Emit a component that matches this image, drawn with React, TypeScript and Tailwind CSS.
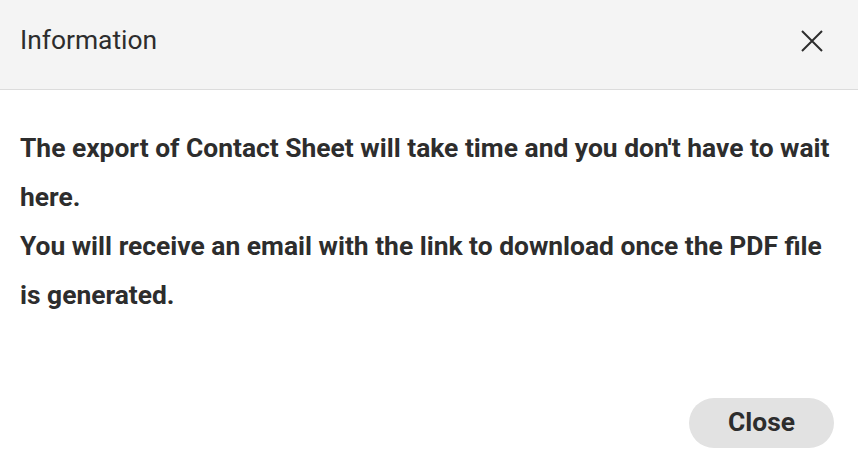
export default function App() {
  return (
    <div className="flex h-[465px] w-[858px] flex-col bg-white font-['Roboto',sans-serif] text-[#2d2d2d]">
      <div className="flex h-[90px] items-center justify-between border-b border-[#dcdcdc] bg-[#f4f4f4] pb-2 pl-5 pr-[34px]">
        <h2 className="text-[26.4px] font-normal">Information</h2>
        <button className="flex h-6 w-6 items-center justify-center">
          <svg width="22" height="22" viewBox="0 0 22 22" fill="none" stroke="#2d2d2d" strokeWidth="2">
            <path d="M1 1L21 21M21 1L1 21" />
          </svg>
        </button>
      </div>
      <div className="flex-1 px-5 pt-[34px]">
        <p className="text-[26.4px] font-bold leading-[49px]">
          The export of Contact Sheet will take time and you don't have to wait here.
          <br />
          You will receive an email with the link to download once the PDF file is generated.
        </p>
      </div>
      <div className="flex justify-end pb-[17px] pr-6">
        <button className="h-[50px] w-[145px] rounded-full bg-[#e2e2e2] text-[26.4px] font-bold">Close</button>
      </div>
    </div>
  );
}
